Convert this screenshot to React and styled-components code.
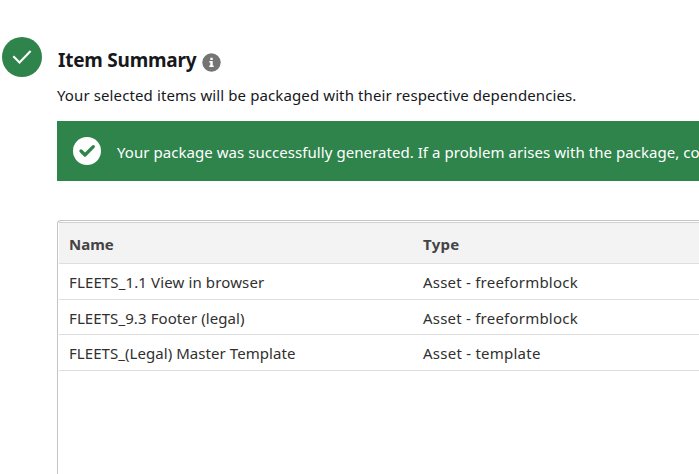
import React from "react";
import styled, { createGlobalStyle } from "styled-components";

const GlobalStyle = createGlobalStyle`
  * { box-sizing: border-box; }
  body { margin: 0; background: #fff; overflow: hidden; }
`;

const Page = styled.main`
  display: flex;
  width: 699px;
  height: 474px;
  overflow: hidden;
  background: #fff;
  color: #16181c;
  font-family: "Segoe UI", "Noto Sans", sans-serif;
  font-size: 15px;
`;

const StepColumn = styled.aside`
  flex: 0 0 57px;
  padding: 37px 0 0 2px;
`;

const StepBadge = styled.div`
  display: grid;
  place-items: center;
  width: 40px;
  height: 40px;
  border-radius: 50%;
  background: #2f844c;
`;

const Icon = styled.svg`
  display: block;
  flex: none;
`;

const Content = styled.section`
  flex: none;
  width: 642px;
  padding-top: 46px;
  display: flex;
  flex-direction: column;
`;

const Heading = styled.header`
  display: flex;
  flex: none;
  align-items: center;
  height: 28px;
  gap: 5.5px;
`;

const Title = styled.h1`
  width: 138px;
  margin: 0 0 0 1px;
  font-size: 19px;
  line-height: 28px;
  font-weight: 700;
  white-space: nowrap;
`;

const InfoIcon = styled(Icon)`
  margin-top: 4px;
`;

const Fit = styled.span`
  letter-spacing: ${(p) => p.$spacing || 0}px;
  white-space: pre;
`;

const Description = styled.p`
  flex: none;
  margin: 10px 0 0;
  height: 22px;
  line-height: 22px;
`;

const Alert = styled.div`
  display: flex;
  flex: none;
  align-items: center;
  gap: 16px;
  height: 60px;
  margin-top: 15px;
  padding: 0 0 0 16px;
  background: #2f844c;
  color: #fff;
`;

const AlertText = styled.div`
  line-height: 22px;
  padding-top: 2px;
`;

const TableFrame = styled.div`
  flex: none;
  height: 300px;
  margin-top: 39px;
  padding: 1px 0 0 1px;
  border: 1px solid #c4c4c4;
  border-right: 0;
  border-radius: 4px 0 0 0;
`;

const Row = styled.div`
  display: grid;
  grid-template-columns: 354px 1fr;
  align-items: center;
  height: ${(p) => p.$height}px;
  padding: ${(p) => (p.$height % 2 ? 2 : 0)}px 0 0 10px;
  border-bottom: 1px solid #dedede;
  color: #303030;
  line-height: 20px;
`;

const HeaderRow = styled(Row)`
  padding-top: 2px;
  border-top: 1px solid #d0d0d0;
  background: #f3f3f3;
  color: #444;
  font-weight: 700;
`;

const rows = [
  { name: "FLEETS_1.1 View in browser", nameSpacing: 0.13, type: "Asset - freeformblock", typeSpacing: 0.22, height: 36 },
  { name: "FLEETS_9.3 Footer (legal)", nameSpacing: 0.09, type: "Asset - freeformblock", typeSpacing: 0.22, height: 35 },
  { name: "FLEETS_(Legal) Master Template", nameSpacing: 0.06, type: "Asset - template", typeSpacing: 0.24, height: 36 },
];

export default function App() {
  return (
    <>
      <GlobalStyle />
      <Page>
        <StepColumn>
          <StepBadge>
            <Icon width="40" height="40" viewBox="0 0 40 40" fill="none">
              <path d="M11.3 19.3l6.2 6.2L28.6 14" stroke="#fff" strokeWidth="2.1" />
            </Icon>
          </StepBadge>
        </StepColumn>
        <Content>
          <Heading>
            <Title><Fit $spacing={-0.22}>Item Summary</Fit></Title>
            <InfoIcon width="19" height="19" viewBox="0 0 19 19">
              <circle cx="9.5" cy="9.5" r="9.2" fill="#747474" />
              <path fill="#fff" d="M8.3 4.8h2.4v2.1H8.3zM7.3 8.1h3.4v4.3h1v1.5H7.3v-1.5h1V9.6h-1z" />
            </InfoIcon>
          </Heading>
          <Description><Fit $spacing={0.11}>Your selected items will be packaged with their respective dependencies.</Fit></Description>
          <Alert>
            <Icon width="28" height="28" viewBox="0 0 28 28" fill="none">
              <circle cx="14" cy="14" r="14" fill="#fff" />
              <path d="M8 14l4 4 8.3-8.3" stroke="#2f844c" strokeWidth="3.3" strokeLinecap="round" strokeLinejoin="round" />
            </Icon>
            <AlertText><Fit $spacing={0.055}>Your package was successfully generated. If a problem arises with the package, co</Fit></AlertText>
          </Alert>
          <TableFrame>
            <HeaderRow $height={42}>
              <Fit>Name</Fit>
              <Fit $spacing={0.3}>Type</Fit>
            </HeaderRow>
            {rows.map((row) => (
              <Row key={row.name} $height={row.height}>
                <Fit $spacing={row.nameSpacing}>{row.name}</Fit>
                <Fit $spacing={row.typeSpacing}>{row.type}</Fit>
              </Row>
            ))}
          </TableFrame>
        </Content>
      </Page>
    </>
  );
}
